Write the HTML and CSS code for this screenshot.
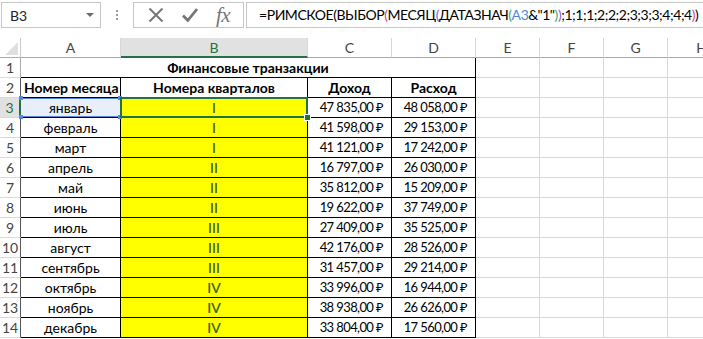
FILE: index.html
```html
<!DOCTYPE html>
<html>
<head>
    <title>Финансовые транзакции</title>
    <link rel="stylesheet" href="styles.css">
</head>
<body>
    <div class="toolbar">
        <div class="name-box">
            <span>B3</span>
            <span class="caret"></span>
        </div>
        <div class="grip"><i></i><i></i><i></i></div>
        <div class="fx-box">
            <svg class="icon" width="16" height="16" viewBox="0 0 16 16">
                <path d="M1.5 1.5 L14.5 14.5 M14.5 1.5 L1.5 14.5" stroke="#767676" stroke-width="2" fill="none"/>
            </svg>
            <svg class="icon" width="16" height="16" viewBox="0 0 16 16">
                <path d="M1 8.5 L5.8 13.5 L15 2" stroke="#767676" stroke-width="2.8" fill="none"/>
            </svg>
            <span class="fx">fx</span>
        </div>
        <div class="formula">=РИМСКОЕ(ВЫБОР<span class="p1">(</span>МЕСЯЦ<span class="p2">(</span>ДАТАЗНАЧ<span class="p3">(</span><span class="ref-a3">A3</span>&amp;"1"<span class="p3">)</span><span class="p2">)</span>;1;1;1;2;2;2;3;3;3;4;4;4<span class="p1">)</span>)</div>
    </div>

    <div class="sheet">
        <!-- column headers -->
        <div class="corner"><span class="tri"></span></div>
        <div class="ch">A</div>
        <div class="ch sel">B</div>
        <div class="ch">C</div>
        <div class="ch">D</div>
        <div class="ch">E</div>
        <div class="ch">F</div>
        <div class="ch">G</div>
        <div class="ch">H</div>

        <!-- row 1 -->
        <div class="rh">1</div>
        <div class="c t title">Финансовые транзакции</div>
        <div class="c"></div><div class="c"></div><div class="c"></div><div class="c"></div>

        <!-- row 2 -->
        <div class="rh tb">2</div>
        <div class="c t bold">Номер месяца</div>
        <div class="c t bold">Номера кварталов</div>
        <div class="c t bold">Доход</div>
        <div class="c t bold">Расход</div>
        <div class="c"></div><div class="c"></div><div class="c"></div><div class="c"></div>

        <!-- row 3 -->
        <div class="rh tb sel">3</div>
        <div class="c t ref">январь<i class="h tl"></i><i class="h tr"></i><i class="h bl"></i><i class="h br"></i></div>
        <div class="c t q active">I<i class="fill"></i></div>
        <div class="c t num">47 835,00 ₽</div>
        <div class="c t num">48 058,00 ₽</div>
        <div class="c"></div><div class="c"></div><div class="c"></div><div class="c"></div>

        <div class="rh tb">4</div>
        <div class="c t">февраль</div>
        <div class="c t q">I</div>
        <div class="c t num">41 598,00 ₽</div>
        <div class="c t num">29 153,00 ₽</div>
        <div class="c"></div><div class="c"></div><div class="c"></div><div class="c"></div>

        <div class="rh tb">5</div>
        <div class="c t">март</div>
        <div class="c t q">I</div>
        <div class="c t num">41 121,00 ₽</div>
        <div class="c t num">17 242,00 ₽</div>
        <div class="c"></div><div class="c"></div><div class="c"></div><div class="c"></div>

        <div class="rh tb">6</div>
        <div class="c t">апрель</div>
        <div class="c t q">II</div>
        <div class="c t num">16 797,00 ₽</div>
        <div class="c t num">26 030,00 ₽</div>
        <div class="c"></div><div class="c"></div><div class="c"></div><div class="c"></div>

        <div class="rh tb">7</div>
        <div class="c t">май</div>
        <div class="c t q">II</div>
        <div class="c t num">35 812,00 ₽</div>
        <div class="c t num">15 209,00 ₽</div>
        <div class="c"></div><div class="c"></div><div class="c"></div><div class="c"></div>

        <div class="rh tb">8</div>
        <div class="c t">июнь</div>
        <div class="c t q">II</div>
        <div class="c t num">19 622,00 ₽</div>
        <div class="c t num">37 749,00 ₽</div>
        <div class="c"></div><div class="c"></div><div class="c"></div><div class="c"></div>

        <div class="rh tb">9</div>
        <div class="c t">июль</div>
        <div class="c t q">III</div>
        <div class="c t num">27 409,00 ₽</div>
        <div class="c t num">35 525,00 ₽</div>
        <div class="c"></div><div class="c"></div><div class="c"></div><div class="c"></div>

        <div class="rh tb">10</div>
        <div class="c t">август</div>
        <div class="c t q">III</div>
        <div class="c t num">42 176,00 ₽</div>
        <div class="c t num">28 526,00 ₽</div>
        <div class="c"></div><div class="c"></div><div class="c"></div><div class="c"></div>

        <div class="rh tb">11</div>
        <div class="c t">сентябрь</div>
        <div class="c t q">III</div>
        <div class="c t num">31 457,00 ₽</div>
        <div class="c t num">29 214,00 ₽</div>
        <div class="c"></div><div class="c"></div><div class="c"></div><div class="c"></div>

        <div class="rh tb">12</div>
        <div class="c t">октябрь</div>
        <div class="c t q">IV</div>
        <div class="c t num">33 996,00 ₽</div>
        <div class="c t num">16 944,00 ₽</div>
        <div class="c"></div><div class="c"></div><div class="c"></div><div class="c"></div>

        <div class="rh tb">13</div>
        <div class="c t">ноябрь</div>
        <div class="c t q">IV</div>
        <div class="c t num">38 938,00 ₽</div>
        <div class="c t num">26 626,00 ₽</div>
        <div class="c"></div><div class="c"></div><div class="c"></div><div class="c"></div>

        <div class="rh tb">14</div>
        <div class="c t">декабрь</div>
        <div class="c t q">IV</div>
        <div class="c t num">33 804,00 ₽</div>
        <div class="c t num">17 560,00 ₽</div>
        <div class="c"></div><div class="c"></div><div class="c"></div><div class="c"></div>
    </div>
</body>
</html>
```

FILE: styles.css
```css
body {
    margin: 0;
    background: white;
    font-family: 'Lato', 'Noto Sans', sans-serif;
    font-size: 14px;
    color: #000;
    overflow: hidden;
}

/* formula bar */
.toolbar {
    display: flex;
    align-items: flex-start;
    height: 38px;
    padding-top: 2px;
    padding-left: 1px;
    box-sizing: border-box;
}
.name-box {
    flex: none;
    width: 100px;
    height: 26px;
    border: 1px solid #c6c6c6;
    box-sizing: border-box;
    display: flex;
    align-items: center;
    justify-content: space-between;
    padding: 0 6px 0 8px;
    color: #222;
}
.caret {
    width: 0;
    height: 0;
    border-left: 4px solid transparent;
    border-right: 4px solid transparent;
    border-top: 4px solid #6b6b6b;
}
.grip {
    flex: none;
    width: 32px;
    height: 26px;
    display: flex;
    flex-direction: column;
    align-items: center;
    justify-content: center;
    gap: 2px;
}
.grip i {
    width: 2px;
    height: 2px;
    background: #9a9a9a;
}
.fx-box {
    flex: none;
    width: 111px;
    height: 26px;
    border: 1px solid #c6c6c6;
    box-sizing: border-box;
    display: flex;
    align-items: center;
    padding-left: 14px;
    gap: 18px;
}
.fx {
    font-family: 'Liberation Serif', serif;
    font-style: italic;
    font-size: 21px;
    color: #767676;
    line-height: 1;
    letter-spacing: -0.5px;
}
.formula {
    flex: 1;
    min-width: 0;
    height: 26px;
    margin-left: 2px;
    border: 1px solid #c6c6c6;
    border-right: none;
    box-sizing: border-box;
    padding-left: 12px;
    line-height: 24px;
    white-space: nowrap;
    overflow: hidden;
    font-size: 14px;
    letter-spacing: -0.45px;
}
.p1 { color: #e0457c; }
.p2 { color: #9a57cf; }
.p3 { color: #3aa675; }
.ref-a3 { color: #4f86d6; }

/* sheet grid */
.sheet {
    display: grid;
    width: 736px;
    grid-template-columns: 21px 100px 187px 84px 84px 64px 64px 64px 68px;
    grid-auto-rows: 20px;
}
.sheet > div {
    box-sizing: border-box;
    border-right: 1px solid #d8d8d8;
    border-bottom: 1px solid #d8d8d8;
    line-height: 19px;
    white-space: nowrap;
}
.corner {
    position: relative;
    border-right-color: #c9c9c9 !important;
    border-bottom-color: #ababab !important;
}
.tri {
    position: absolute;
    right: 2px;
    bottom: 2px;
    width: 0;
    height: 0;
    border-left: 13px solid transparent;
    border-bottom: 13px solid #dfdfdf;
}
.ch {
    text-align: center;
    color: #444;
    border-bottom-color: #ababab !important;
}
.ch.sel {
    background: #e1e1e1;
    color: #217346;
    border-bottom: 2px solid #217346 !important;
}
.rh {
    text-align: center;
    color: #444;
    border-right-color: #ababab !important;
}
.rh.tb {
    border-right-color: #555 !important;
}
.rh.sel {
    background: #e1e1e1;
    color: #217346;
    border-right: 2px solid #217346 !important;
}

/* cells */
.c {
    padding: 0 3px;
}
.t {
    text-align: center;
    border-right-color: #000 !important;
    border-bottom-color: #000 !important;
}
.title {
    grid-column: span 4;
    font-weight: bold;
}
.bold {
    font-weight: bold;
}
.num {
    text-align: right;
    padding-right: 8px;
    font-size: 13px;
    letter-spacing: -0.6px;
}
.q {
    background: #ffff00;
    color: #3a5a1e;
    -webkit-text-stroke: 0.2px #3a5a1e;
}

/* referenced cell A3 */
.ref {
    position: relative;
    background: #e9effa;
    box-shadow: inset 0 -1px 0 #5a86d8, inset 0 1px 0 #5a86d8;
}
.h {
    position: absolute;
    width: 4px;
    height: 4px;
    background: #5a86d8;
}
.h.tl { left: -2px; top: -2px; }
.h.tr { right: -2px; top: -2px; }
.h.bl { left: -2px; bottom: -2px; }
.h.br { right: -2px; bottom: -2px; }

/* active cell B3 */
.active {
    position: relative;
}
.active::after {
    content: '';
    position: absolute;
    left: -1px;
    top: -1px;
    right: -1px;
    bottom: -1px;
    border: 2px solid #217346;
}
.fill {
    position: absolute;
    right: -4px;
    bottom: -4px;
    width: 5px;
    height: 5px;
    background: #217346;
    border: 1px solid white;
    z-index: 2;
}
```
